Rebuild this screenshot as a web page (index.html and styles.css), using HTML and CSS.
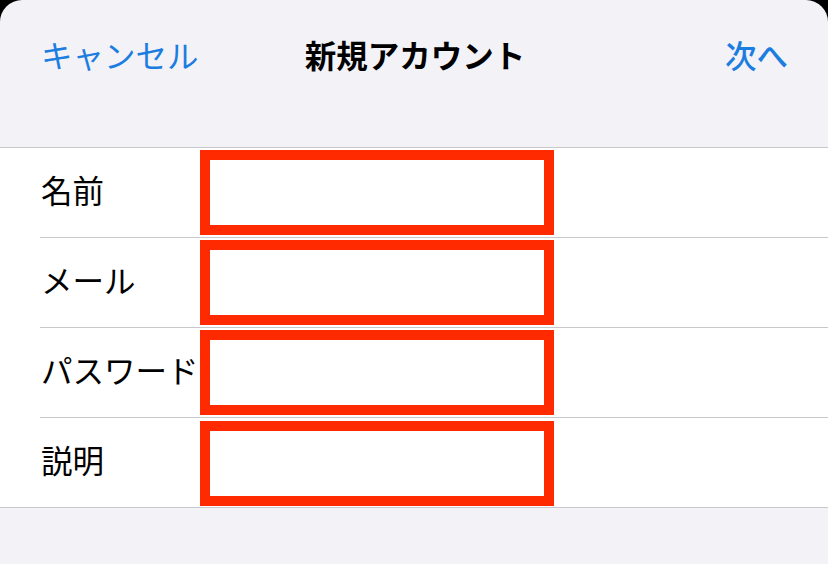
FILE: index.html
```html
<html>
<head>
<meta charset="utf-8">
<link rel="stylesheet" href="styles.css">
</head>
<body>
<div class="sheet">
  <div class="nav">
    <span class="nav-btn">キャンセル</span>
    <span class="nav-title">新規アカウント</span>
    <span class="nav-btn nav-next">次へ</span>
  </div>

  <div class="form">
    <div class="row">
      <span class="label">名前</span>
      <div class="mark"></div>
    </div>
    <div class="row">
      <span class="label">メール</span>
      <div class="mark"></div>
    </div>
    <div class="row">
      <span class="label">パスワード</span>
      <div class="mark"></div>
    </div>
    <div class="row">
      <span class="label">説明</span>
      <div class="mark mark-last"></div>
    </div>
  </div>
</div>
</body>
</html>
```

FILE: styles.css
```css
* {
  box-sizing: border-box;
}

html, body {
  margin: 0;
  height: 100%;
  background: #000;
}

body {
  font-family: "Noto Sans CJK JP", "Noto Sans", sans-serif;
  font-size: 31.5px;
  color: #000;
}

.sheet {
  height: 564px;
  background: #f2f2f7;
  border-radius: 22px 22px 0 0;
  overflow: hidden;
}

.nav {
  height: 147px;
  display: flex;
  align-items: flex-start;
  justify-content: space-between;
  padding: 34px 40px 0 41px;
  position: relative;
}

.nav-btn {
  color: #1c7de0;
  line-height: 40px;
}

.nav-next {
  font-weight: 500;
}

.nav-title {
  position: absolute;
  left: 0;
  right: 0;
  top: 34px;
  text-align: center;
  font-weight: 700;
  line-height: 40px;
  padding-left: 2px;
}

.form {
  background: #fff;
  border-top: 1px solid #c8c7cc;
  border-bottom: 1px solid #c8c7cc;
  padding-left: 40px;
}

.row {
  height: 90px;
  display: flex;
  align-items: flex-start;
  border-bottom: 1px solid #c8c7cc;
}

.row:last-child {
  border-bottom: none;
  height: 89px;
}

.label {
  width: 160px;
  flex: none;
  line-height: 40px;
  padding-top: 21px;
  padding-left: 1px;
  white-space: nowrap;
  font-weight: 400;
}

.mark {
  margin-top: 2px;
  width: 354px;
  height: 85px;
  border: 10px solid #ff2a00;
  background: #fff;
}

.mark-last {
  margin-top: 3px;
}
```
